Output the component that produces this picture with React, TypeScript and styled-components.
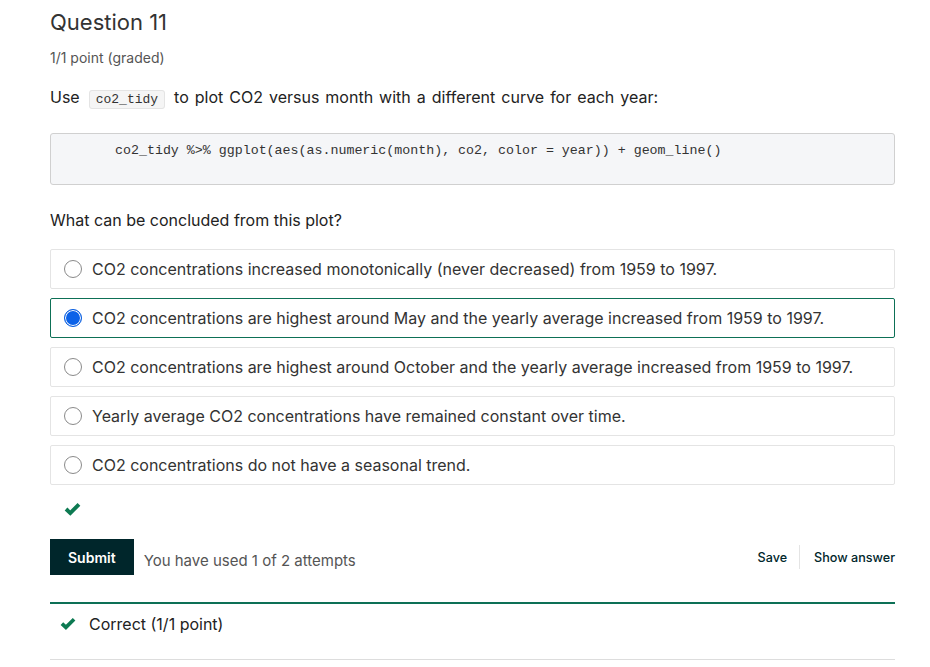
import styled, { createGlobalStyle } from "styled-components";

const GlobalStyle = createGlobalStyle`
  body {
    margin: 0;
    background: #fff;
    font-family: Inter, "Noto Sans", sans-serif;
    color: #454545;
  }
`;

const options = [
  "CO2 concentrations increased monotonically (never decreased) from 1959 to 1997.",
  "CO2 concentrations are highest around May and the yearly average increased from 1959 to 1997.",
  "CO2 concentrations are highest around October and the yearly average increased from 1959 to 1997.",
  "Yearly average CO2 concentrations have remained constant over time.",
  "CO2 concentrations do not have a seasonal trend.",
];

function Check({ size = 16 }: { size?: number }) {
  return (
    <svg width={size} height={size * 0.8} viewBox="0 0 20 16">
      <path
        d="M2.4 8.2 L7.4 13 L17.6 2.8"
        fill="none"
        stroke="#0d7a52"
        strokeWidth="4.6"
        strokeLinecap="butt"
        strokeLinejoin="miter"
      />
    </svg>
  );
}

function App() {
  const selected = 1;
  return (
    <>
      <GlobalStyle />
      <Page>
        <Title>Question 11</Title>
        <Points>1/1 point (graded)</Points>
        <Prompt>
          Use <InlineCode>co2_tidy</InlineCode> to plot CO2 versus month with a different curve for each
          year:
        </Prompt>
        <CodeBlock>co2_tidy %&gt;% ggplot(aes(as.numeric(month), co2, color = year)) + geom_line()</CodeBlock>
        <Question>What can be concluded from this plot?</Question>
        <Options>
          {options.map((text, i) => (
            <Option key={i} $active={i === selected}>
              <Radio $checked={i === selected} />
              {text}
            </Option>
          ))}
        </Options>
        <Status>
          <Check size={17} />
        </Status>
        <Actions>
          <SubmitButton>Submit</SubmitButton>
          <Attempts>You have used 1 of 2 attempts</Attempts>
          <Spacer />
          <LinkButton>Save</LinkButton>
          <Divider />
          <LinkButton>Show answer</LinkButton>
        </Actions>
        <Feedback>
          <Check />
          Correct (1/1 point)
        </Feedback>
      </Page>
    </>
  );
}

const Page = styled.div`
  width: 845px;
  margin-left: 50px;
  padding-top: 8px;
`;

const Title = styled.h3`
  margin: 0;
  font-size: 22px;
  font-weight: 400;
  line-height: 28px;
  color: #333;
`;

const Points = styled.div`
  margin-top: 14px;
  font-size: 14px;
  line-height: 16px;
  color: #555;
`;

const Prompt = styled.p`
  margin: 20px 0 0;
  font-size: 16px;
  line-height: 22px;
  color: #222;
  word-spacing: 1.5px;
`;

const Question = styled.p`
  margin: 24px 0 0;
  font-size: 16px;
  line-height: 22px;
  color: #222;
`;

const InlineCode = styled.code`
  font-family: "Liberation Mono", monospace;
  font-size: 13px;
  background: #f5f5f5;
  border: 1px solid #e4e4e4;
  border-radius: 3px;
  padding: 1px 6px;
  margin: 0 3px;
  color: #333;
  word-spacing: 0;
`;

const CodeBlock = styled.pre`
  margin: 22px 0 0;
  height: 52px;
  box-sizing: border-box;
  padding: 9px 10px 0 64px;
  background: #f5f6f8;
  border: 1px solid #d0d0d0;
  border-radius: 3px;
  font-family: "Liberation Mono", monospace;
  font-size: 13.3px;
  line-height: 16px;
  color: #333;
`;

const Options = styled.div`
  margin-top: 18px;
  display: flex;
  flex-direction: column;
  gap: 9px;
`;

const Option = styled.label<{ $active: boolean }>`
  display: flex;
  align-items: center;
  gap: 10px;
  height: 40px;
  box-sizing: border-box;
  padding-left: 13px;
  border: 1px solid ${(p) => (p.$active ? "#0d7056" : "#e4e4e4")};
  border-radius: 2px;
  font-size: 16px;
  color: #333;
`;

const Radio = styled.span<{ $checked: boolean }>`
  width: 18px;
  height: 18px;
  box-sizing: border-box;
  border-radius: 50%;
  flex-shrink: 0;
  border: 1px solid ${(p) => (p.$checked ? "#0a5fe0" : "#8a8a8a")};
  background: ${(p) => (p.$checked ? "#0b62e8" : "#fff")};
  box-shadow: ${(p) => (p.$checked ? "inset 0 0 0 1px #fff" : "none")};
`;

const Status = styled.div`
  height: 22px;
  margin-top: 13px;
  padding-left: 14px;
  display: flex;
  align-items: center;
`;

const Actions = styled.div`
  margin-top: 19px;
  display: flex;
  align-items: center;
`;

const SubmitButton = styled.button`
  height: 36px;
  padding: 0 18px;
  border: none;
  border-radius: 0;
  background: #00262b;
  color: #fff;
  font-family: Inter, sans-serif;
  font-size: 14px;
  font-weight: 600;
`;

const Attempts = styled.span`
  margin-left: 10px;
  margin-top: 7px;
  font-size: 15px;
  color: #555;
`;

const Spacer = styled.div`
  flex: 1;
`;

const LinkButton = styled.button`
  background: none;
  border: none;
  padding: 0;
  font-family: Inter, sans-serif;
  font-size: 12.6px;
  font-weight: 500;
  color: #00262b;
`;

const Divider = styled.div`
  width: 1px;
  height: 24px;
  background: #e4e4e4;
  margin: 0 14px 0 12px;
`;

const Feedback = styled.div`
  margin-top: 27px;
  border-top: 2px solid #0d7056;
  border-bottom: 1px solid #ddd;
  height: 58px;
  box-sizing: border-box;
  padding: 0 0 16px 10px;
  display: flex;
  align-items: center;
  gap: 13px;
  font-size: 16px;
  color: #222;
`;

export default App;
